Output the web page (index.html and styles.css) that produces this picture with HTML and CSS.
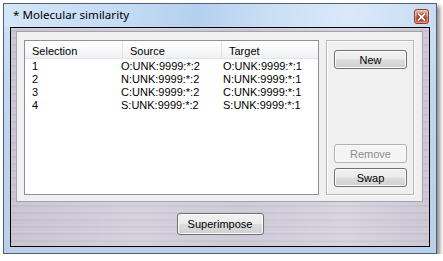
FILE: index.html
```html
<!DOCTYPE html>
<html lang="en">
<head>
  <meta charset="UTF-8">
  <title>Molecular similarity</title>
  <link rel="stylesheet" href="styles.css">
</head>
<body>
  <div class="window">
    <div class="titlebar">
      <span class="title">* Molecular similarity</span>
      <span class="close">
        <svg width="9" height="8" viewBox="0 0 9 8">
          <path d="M1.5 1 L7.5 7 M7.5 1 L1.5 7" stroke="#6b2a1c" stroke-width="3.4" stroke-linecap="square"/>
          <path d="M1.5 1 L7.5 7 M7.5 1 L1.5 7" stroke="#ffffff" stroke-width="1.8" stroke-linecap="square"/>
        </svg>
      </span>
    </div>

    <div class="client">
      <div class="panel">
        <div class="listview">
          <div class="lv-head">
            <span class="hcol h1">Selection</span>
            <span class="hcol h2">Source</span>
            <span class="hcol h3">Target</span>
          </div>
          <div class="lv-row"><span>1</span><span>O:UNK:9999:*:2</span><span>O:UNK:9999:*:1</span></div>
          <div class="lv-row"><span>2</span><span>N:UNK:9999:*:2</span><span>N:UNK:9999:*:1</span></div>
          <div class="lv-row"><span>3</span><span>C:UNK:9999:*:2</span><span>C:UNK:9999:*:1</span></div>
          <div class="lv-row"><span>4</span><span>S:UNK:9999:*:2</span><span>S:UNK:9999:*:1</span></div>
        </div>

        <div class="side">
          <button class="btn">New</button>
          <div class="spacer"></div>
          <button class="btn" disabled>Remove</button>
          <button class="btn">Swap</button>
        </div>
      </div>

      <div class="footer">
        <button class="btn wide">Superimpose</button>
      </div>
    </div>
  </div>
</body>
</html>
```

FILE: styles.css
```css
body {
  margin: 0;
  padding: 3px 0 0 3px;
  background: #ffffff;
  font-family: "Liberation Sans", Arial, sans-serif;
  font-size: 11px;
  color: #000;
}
.window {
  width: 420px;
  height: 243px;
  border: 1px solid #55606c;
  padding: 0 6px 6px 6px;
  background: linear-gradient(180deg, #cfe2f6 0%, #bed6ef 40%, #b8d0ea 100%);
  box-shadow: 3px 3px 4px rgba(0, 0, 0, 0.45);
}
.titlebar {
  height: 23px;
  display: flex;
  justify-content: space-between;
  align-items: flex-start;
  margin: 0 -6px;
  padding: 0 7px 0 9px;
  background: linear-gradient(100deg, #d4e6f8 0%, #c2daf3 30%, #b4d0ee 45%, #c9def5 60%, #d9e9f9 80%, #c7dcf3 100%);
}
.title {
  font-family: "Noto Sans", "Open Sans", sans-serif;
  font-size: 11.6px;
  line-height: 22px;
  color: #000;
}
.close {
  margin-top: 5px;
  width: 13px;
  height: 13px;
  border: 1px solid #8c3b2b;
  border-radius: 3px;
  display: flex;
  align-items: center;
  justify-content: center;
  background: linear-gradient(180deg, #eab3a3 0%, #d9836b 45%, #c84a2d 55%, #d2664a 100%);
  box-shadow: inset 0 0 0 1px rgba(255, 255, 255, 0.35);
}
.client {
  height: 218px;
  border: 1px solid #000;
  display: flex;
  flex-direction: column;
  background:
    repeating-linear-gradient(180deg, rgba(255,255,255,0.18) 0px, rgba(255,255,255,0) 2px, rgba(0,0,0,0.04) 3px, rgba(255,255,255,0.1) 5px, rgba(0,0,0,0) 7px),
    linear-gradient(90deg, #c6c2d0 0%, #d3cfdc 30%, #cbc7d5 55%, #d6d2de 80%, #c9c5d3 100%);
}
.panel {
  margin: 3px 6px 0 5px;
  height: 155px;
  border: 1px solid #a4a3ad;
  background: #f0f0f0;
  display: flex;
  gap: 7px;
  padding: 8px 8px 6px 7px;
}
.listview {
  width: 293px;
  height: 153px;
  border: 1px solid #8e9298;
  background: #fff;
}
.lv-head {
  height: 17px;
  display: grid;
  grid-template-columns: 98px 99px 1fr;
  border-bottom: 1px solid #e3e5e8;
  background: linear-gradient(180deg, #ffffff 0%, #f7f8f9 60%, #eef0f2 100%);
}
.hcol {
  padding: 4px 0 0 7px;
  line-height: 13px;
  border-right: 1px solid #e2e3e5;
}
.h3 {
  border-right: none;
}
.lv-row {
  display: grid;
  grid-template-columns: 96px 102px 1fr;
  line-height: 13px;
}
.lv-row span:first-child {
  padding-left: 7px;
}
.lv-head + .lv-row {
  margin-top: 1px;
}
.side {
  flex: 1;
  border: 1px solid #b7b7b7;
  box-shadow: inset 1px 1px 0 #fff, 1px 1px 0 #fff;
  display: flex;
  flex-direction: column;
  padding: 9px 6px 7px 7px;
  gap: 5px;
}
.spacer {
  flex: 1;
}
.btn {
  width: 73px;
  height: 19px;
  padding: 0;
  font-family: "Liberation Sans", Arial, sans-serif;
  font-size: 11px;
  color: #000;
  border: 1px solid #707070;
  border-radius: 3px;
  background: linear-gradient(180deg, #f2f2f2 0%, #ebebeb 48%, #dddddd 52%, #cfcfcf 100%);
  box-shadow: inset 0 0 0 1px #fbfbfb;
}
.btn:disabled {
  color: #8d8d8d;
  border-color: #adb2b5;
  background: #f4f4f4;
}
.footer {
  flex: 1;
  display: flex;
  justify-content: center;
  padding-top: 11px;
}
.btn.wide {
  width: 87px;
  height: 22px;
}
```
